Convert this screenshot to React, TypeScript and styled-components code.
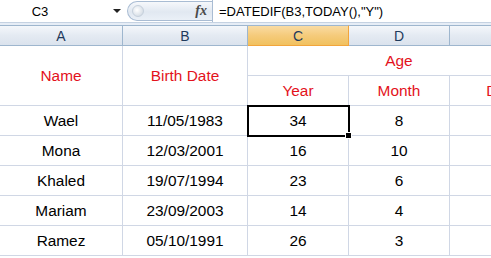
import React from "react";
import styled, { createGlobalStyle } from "styled-components";

const Global = createGlobalStyle`
  html, body { margin: 0; padding: 0; background: #fff; }
  body { font-family: Arial, "Liberation Sans", sans-serif; overflow: hidden; }
`;

const Page = styled.div`
  width: 491px;
  height: 258px;
  overflow: hidden;
  background: #fff;
  display: flex;
  flex-direction: column;
`;

const FormulaBar = styled.div`
  height: 22px;
  display: flex;
  align-items: stretch;
  background: #fff;
  border-bottom: 1px solid #c5d2e2;
`;

const NameBox = styled.div`
  width: 127px;
  display: flex;
  align-items: center;
  font-size: 13px;
  color: #000;
`;

const NameText = styled.span`
  width: 80px;
  text-align: center;
`;

const DropArrow = styled.span`
  width: 0;
  height: 0;
  border-left: 4px solid transparent;
  border-right: 4px solid transparent;
  border-top: 4px solid #222;
  margin-left: auto;
  margin-right: 6px;
`;

const Pill = styled.div`
  width: 85px;
  margin: 1px 0;
  border-radius: 11px 0 0 11px;
  background: linear-gradient(#f6f8fb, #e1e8f1 55%, #eaf0f7);
  border: 1px solid #a9bcd3;
  border-right: none;
  display: flex;
  align-items: center;
  justify-content: space-between;
  padding: 0 5px 0 4px;
  box-sizing: border-box;
`;

const Grip = styled.span`
  width: 12px;
  height: 12px;
  border-radius: 50%;
  background: radial-gradient(circle at 40% 40%, #ffffff, #c9d3de);
  border: 1px solid #c6d0dc;
  box-sizing: border-box;
`;

const Fx = styled.span`
  font-family: "Liberation Serif", "Times New Roman", serif;
  font-style: italic;
  font-weight: bold;
  font-size: 14px;
  color: #4a4a4a;
`;

const FormulaInput = styled.div`
  flex: 1;
  border-left: 1px solid #a9bcd3;
  display: flex;
  align-items: center;
  padding-left: 6px;
  font-size: 13px;
  color: #000;
  white-space: nowrap;
`;

const Spacer = styled.div`
  height: 2px;
  background: #e6edf6;
`;

const Sheet = styled.div`
  display: grid;
  grid-template-columns: 123px 125px 101px 101px 101px;
  grid-template-rows: 21px repeat(7, 30px);
  width: 551px;
`;

const ColHead = styled.div<{ $sel?: boolean }>`
  box-sizing: border-box;
  display: flex;
  align-items: center;
  justify-content: center;
  font-size: 14px;
  color: #1f3a5c;
  background: ${(p) =>
    p.$sel
      ? "linear-gradient(#f9dba3, #f5cb7b 50%, #f1c15f)"
      : "linear-gradient(#f4f7fb, #e4eaf2 50%, #dbe3ed)"};
  border-right: 1px solid ${(p) => (p.$sel ? "#f2a53c" : "#9eb6ce")};
  border-top: 1px solid #9eb6ce;
  border-bottom: 1px solid ${(p) => (p.$sel ? "#f2a53c" : "#9eb6ce")};
`;

const Cell = styled.div<{ $red?: boolean; $span?: number; $rows?: number }>`
  box-sizing: border-box;
  display: flex;
  align-items: center;
  justify-content: center;
  font-size: 15.4px;
  color: ${(p) => (p.$red ? "#e3121c" : "#000")};
  border-right: 1px solid #d0d7e5;
  border-bottom: 1px solid #d0d7e5;
  white-space: nowrap;
  grid-column: span ${(p) => p.$span ?? 1};
  grid-row: span ${(p) => p.$rows ?? 1};
`;

const ActiveCell = styled(Cell)`
  position: relative;
  outline: 2px solid #000;
  outline-offset: -1px;
  z-index: 1;
`;

const FillHandle = styled.span`
  position: absolute;
  right: -4px;
  bottom: -4px;
  width: 5px;
  height: 5px;
  background: #000;
  border: 1px solid #fff;
`;

const rows: [string, string, string, string][] = [
  ["Wael", "11/05/1983", "34", "8"],
  ["Mona", "12/03/2001", "16", "10"],
  ["Khaled", "19/07/1994", "23", "6"],
  ["Mariam", "23/09/2003", "14", "4"],
  ["Ramez", "05/10/1991", "26", "3"],
];

export default function App() {
  return (
    <Page>
      <Global />
      <FormulaBar>
        <NameBox>
          <NameText>C3</NameText>
          <DropArrow />
        </NameBox>
        <Pill>
          <Grip />
          <Fx>fx</Fx>
        </Pill>
        <FormulaInput>=DATEDIF(B3,TODAY(),"Y")</FormulaInput>
      </FormulaBar>
      <Spacer />
      <Sheet>
        <ColHead>A</ColHead>
        <ColHead>B</ColHead>
        <ColHead $sel>C</ColHead>
        <ColHead>D</ColHead>
        <ColHead>E</ColHead>

        <Cell $red $rows={2}>Name</Cell>
        <Cell $red $rows={2}>Birth Date</Cell>
        <Cell $red $span={3}>Age</Cell>
        <Cell $red>Year</Cell>
        <Cell $red>Month</Cell>
        <Cell $red>Day</Cell>

        {rows.map((r, i) => (
          <React.Fragment key={r[0]}>
            <Cell>{r[0]}</Cell>
            <Cell>{r[1]}</Cell>
            {i === 0 ? (
              <ActiveCell>
                {r[2]}
                <FillHandle />
              </ActiveCell>
            ) : (
              <Cell>{r[2]}</Cell>
            )}
            <Cell>{r[3]}</Cell>
            <Cell />
          </React.Fragment>
        ))}
      </Sheet>
    </Page>
  );
}
